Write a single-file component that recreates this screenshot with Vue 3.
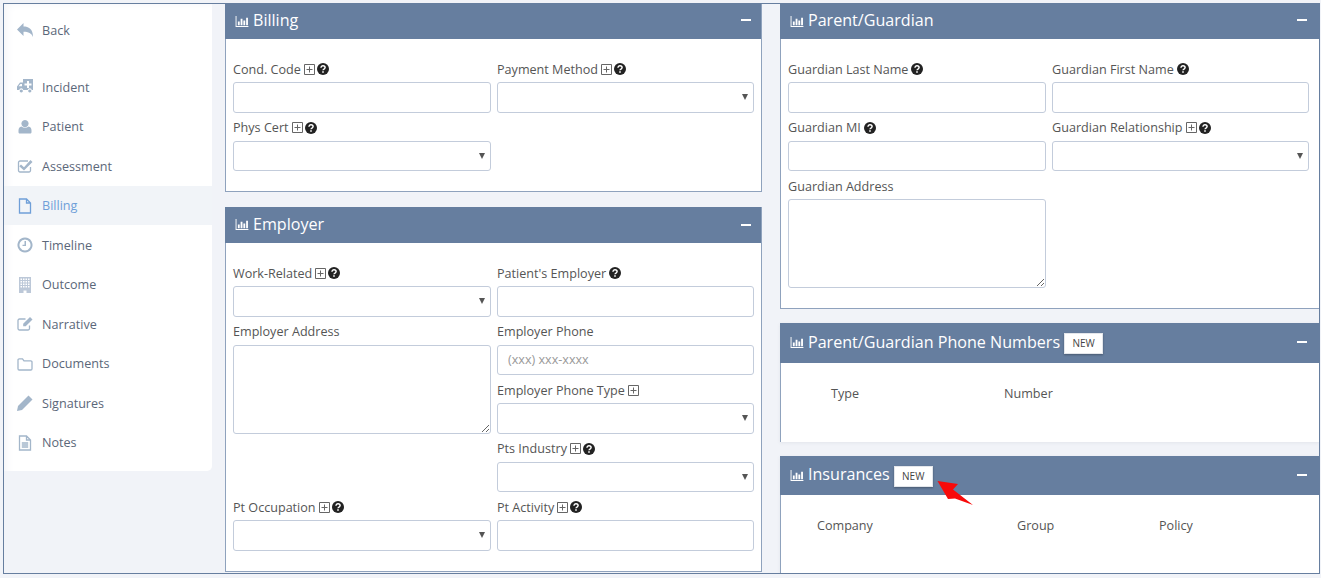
<script setup>
const nav = [
  { t: 'Back', cls: 'back', f: ['M0 6.500 6.500 0v3.600c5 0 9.500 2.400 9.500 10.400-1.500-3.800-4.500-5.200-9.500-5.200V13z'] },
  { t: 'Incident', cls: 'gapped', f: ['M6 0h10v11h-1.200a2.100 2.100 0 0 0-4.100 0H6.300a2.100 2.100 0 0 0-4.100 0H0V7.500L3 3.500h3zM10 2v2.500H7.500v2H10V9h2V6.500h2.500v-2H12V2zM5 5H3.500L1.500 7.300H5z', 'M4.300 10.400a1.600 1.600 0 1 1-.01 0zM12.800 10.400a1.600 1.600 0 1 1-.01 0z'] },
  { t: 'Patient', f: ['M8 1a3.600 3.600 0 1 1-.01 0zM4.500 7.500c1 .8 2.200 1.200 3.500 1.200s2.500-.4 3.500-1.200c2 .2 3 1.700 3 4v1.800c0 .9-.7 1.200-1.300 1.200H2.800c-.6 0-1.300-.3-1.300-1.200v-1.800c0-2.300 1-3.800 3-4z'] },
  { t: 'Assessment', s: ['M13.500 9v3.500a1.500 1.500 0 0 1-1.500 1.500H3a1.500 1.500 0 0 1-1.500-1.500v-8A1.500 1.500 0 0 1 3 3h8'], f: ['M4 6.500 7 9.300 13.500 2 15.500 4 7 12.500 2.200 8.300z'] },
  { t: 'Billing', active: true, s: ['M2.500 1h7l4 4v10h-11zM9.500 1v4h4'] },
  { t: 'Timeline', s: ['M8 1.500a6.500 6.500 0 1 1-.01 0z'], f: ['M7.500 4h1.500v5H5.500V7.700h2z'], w: 2 },
  { t: 'Outcome', cls: 'pale', f: ['M2 0h12v16H9.500v-2.500h-3V16H2zM3.500 1.500v1.500h1.500V1.500zM6 1.500v1.500h1.500V1.500zM8.500 1.500v1.500H10V1.500zM11 1.500v1.500h1.500V1.500zM3.500 4v1.500h1.500V4zM6 4v1.500h1.500V4zM8.500 4v1.500H10V4zM11 4v1.500h1.500V4zM3.500 6.500V8h1.500V6.500zM6 6.500V8h1.500V6.500zM8.500 6.500V8H10V6.500zM11 6.500V8h1.500V6.500zM3.500 9v1.500h1.500V9zM6 9v1.500h1.500V9zM8.500 9v1.500H10V9zM11 9v1.500h1.500V9z'] },
  { t: 'Narrative', s: ['M12.500 9.500v3A1.500 1.500 0 0 1 11 14H2.500A1.500 1.500 0 0 1 1 12.500v-8A1.500 1.500 0 0 1 2.500 3h6'], f: ['M13 1l2.500 2.500-6.800 6.800H6.200V7.800z'] },
  { t: 'Documents', s: ['M1 4a1.200 1.200 0 0 1 1.200-1.200h3.300l1.500 2h6.800A1.200 1.200 0 0 1 15 6v6.800a1.200 1.200 0 0 1-1.200 1.200H2.200A1.200 1.200 0 0 1 1 12.800z'] },
  { t: 'Signatures', f: ['M11.500.5l4 4L5 15l-5 1 1-5z'] },
  { t: 'Notes', s: ['M2.500 1h7l4 4v10h-11zM9.500 1v4h4M4.800 8h6.400M4.800 10h6.400M4.800 12h6.400'] }
]

const billing = [
  { l: 'Cond. Code', p: 1, q: 1 },
  { l: 'Payment Method', p: 1, q: 1, sel: 1 },
  { l: 'Phys Cert', p: 1, q: 1, sel: 1 }
]
const employer = [
  { l: 'Work-Related', p: 1, q: 1, sel: 1 },
  { l: "Patient's Employer", q: 1 },
  { l: 'Employer Address', area: 1 },
  { l: 'Employer Phone', ph: '(xxx) xxx-xxxx' },
  { l: 'Employer Phone Type', p: 1, sel: 1 },
  { l: 'Pts Industry', p: 1, q: 1, sel: 1, col2: 1 },
  { l: 'Pt Occupation', p: 1, q: 1, sel: 1 },
  { l: 'Pt Activity', p: 1, q: 1 }
]
const guardian = [
  { l: 'Guardian Last Name', q: 1 },
  { l: 'Guardian First Name', q: 1 },
  { l: 'Guardian MI', q: 1 },
  { l: 'Guardian Relationship', p: 1, q: 1, sel: 1 },
  { l: 'Guardian Address', area: 1 }
]
const cardsLeft = [
  { title: 'Billing', fields: billing, cls: 'billing' },
  { title: 'Employer', fields: employer, cls: 'employer' }
]
</script>

<template>
  <div class="frame">
    <aside class="side">
      <a v-for="n in nav" :key="n.t" class="nav" :class="[n.cls, { active: n.active }]">
        <svg class="nav-ico" viewBox="0 0 16 16">
          <path v-for="d in n.f || []" :key="d" :d="d" fill="currentColor" fill-rule="evenodd" />
          <path v-for="d in n.s || []" :key="d" :d="d" fill="none" stroke="currentColor" :stroke-width="n.w || 1.300" />
        </svg>
        <span>{{ n.t }}</span>
      </a>
    </aside>

    <main class="cols">
      <div class="col">
        <section v-for="c in cardsLeft" :key="c.title" class="card" :class="c.cls">
          <header class="head">
            <svg class="bars" viewBox="0 0 14 12"><path d="M0 0h1v11h13v1H0zM2.500 6h2v4h-2zM5.500 3h2v7h-2zM8.500 5h2v5h-2zM11.500 2h2v8h-2z" fill="currentColor" /></svg>
            <h2>{{ c.title }}</h2>
            <i class="minus"></i>
          </header>
          <div class="form">
            <div v-for="f in c.fields" :key="f.l" class="field" :class="{ area: f.area, col2: f.col2 }">
              <label>{{ f.l }}
                <svg v-if="f.p" class="plus" viewBox="0 0 11 11"><path d="M.5.500h10v10H.5zM2.500 5.500h6M5.500 2.500v6" fill="none" stroke="currentColor" /></svg>
                <svg v-if="f.q" class="help" viewBox="0 0 12 12"><circle cx="6" cy="6" r="6" fill="currentColor" /><path d="M4 4.700c0-1.300 1-1.900 2-1.900s2.100.6 2.100 1.800c0 1.500-2.100 1.400-2.100 2.700" fill="none" stroke="#fff" stroke-width="1.500" /><path d="M5.200 8.200h1.600v1.500H5.200z" fill="#fff" /></svg>
              </label>
              <textarea v-if="f.area"></textarea>
              <div v-else-if="f.sel" class="select"><select></select></div>
              <input v-else type="text" :placeholder="f.ph" />
            </div>
          </div>
        </section>
      </div>

      <div class="col right">
        <section class="card guardian">
          <header class="head">
            <svg class="bars" viewBox="0 0 14 12"><path d="M0 0h1v11h13v1H0zM2.500 6h2v4h-2zM5.500 3h2v7h-2zM8.500 5h2v5h-2zM11.500 2h2v8h-2z" fill="currentColor" /></svg>
            <h2>Parent/Guardian</h2>
            <i class="minus"></i>
          </header>
          <div class="form">
            <div v-for="f in guardian" :key="f.l" class="field" :class="{ area: f.area }">
              <label>{{ f.l }}
                <svg v-if="f.p" class="plus" viewBox="0 0 11 11"><path d="M.5.500h10v10H.5zM2.500 5.500h6M5.500 2.500v6" fill="none" stroke="currentColor" /></svg>
                <svg v-if="f.q" class="help" viewBox="0 0 12 12"><circle cx="6" cy="6" r="6" fill="currentColor" /><path d="M4 4.700c0-1.300 1-1.900 2-1.900s2.100.6 2.100 1.800c0 1.500-2.100 1.400-2.100 2.700" fill="none" stroke="#fff" stroke-width="1.500" /><path d="M5.200 8.200h1.600v1.500H5.200z" fill="#fff" /></svg>
              </label>
              <textarea v-if="f.area"></textarea>
              <div v-else-if="f.sel" class="select"><select></select></div>
              <input v-else type="text" />
            </div>
          </div>
        </section>

        <section class="card soft phones">
          <header class="head tall">
            <svg class="bars" viewBox="0 0 14 12"><path d="M0 0h1v11h13v1H0zM2.500 6h2v4h-2zM5.500 3h2v7h-2zM8.500 5h2v5h-2zM11.500 2h2v8h-2z" fill="currentColor" /></svg>
            <h2>Parent/Guardian Phone Numbers</h2>
            <button class="new">NEW</button>
            <i class="minus"></i>
          </header>
          <div class="tbl phone-cols"><span>Type</span><span>Number</span></div>
        </section>

        <section class="card soft insurances">
          <header class="head tall">
            <svg class="bars" viewBox="0 0 14 12"><path d="M0 0h1v11h13v1H0zM2.500 6h2v4h-2zM5.500 3h2v7h-2zM8.500 5h2v5h-2zM11.500 2h2v8h-2z" fill="currentColor" /></svg>
            <h2>Insurances</h2>
            <button class="new">NEW</button>
            <i class="minus"></i>
            <svg class="arrow" viewBox="0 0 40 28"><path d="M.5 1 21 4 16 9.500 36 25 18 18.500 11 19z" fill="#f80a0a" /></svg>
          </header>
          <div class="tbl ins-cols"><span>Company</span><span>Group</span><span>Policy</span></div>
        </section>
      </div>
    </main>
  </div>
</template>

<style>
html, body { background: #f1f3f8; }
</style>

<style scoped>
.frame {
  margin: 3px 1px 0 3px;
  height: 571px;
  box-sizing: border-box;
  border: 1px solid #667e9f;
  background: #f1f3f8;
  display: flex;
  align-items: flex-start;
  overflow: hidden;
  font-family: "Open Sans", sans-serif;
  font-size: 12.600px;
  color: #555;
}
.side {
  flex: 0 0 208px;
  box-sizing: border-box;
  height: 467px;
  padding-top: 6.750px;
  background: #fff;
  border-radius: 0 0 5px 0;
  box-shadow: inset 9px 6px 8px -6px #f4f5f8;
}
.nav {
  display: flex;
  align-items: center;
  height: 39.500px;
  padding-left: 13px;
  gap: 9px;
  color: #5b6779;
}
.nav.gapped { margin-top: 17px; }
.nav.active { background: #f1f4f8; color: #6f9fd8; }
.nav-ico { width: 16px; height: 16px; color: #a3b6ca; flex: none; }
.nav.active .nav-ico { color: #6f9fd8; }
.nav.pale .nav-ico { color: #bcc8d8; }
.cols {
  flex: 1;
  margin-left: 13px;
  display: grid;
  grid-template-columns: 537px 1fr;
  gap: 18px;
}
.col { display: flex; flex-direction: column; gap: 15px; min-width: 0; }
.col.right { gap: 14px; }
.card {
  background: #fff;
  border: 1px solid #8fa2bd;
  border-top: 0;
  box-sizing: border-box;
}
.card.soft {
  border-width: 0 0 0 1px;
  box-shadow: 0 1px 3px rgba(120, 130, 150, .12);
}
.billing { height: 188px; }
.employer { height: 365px; }
.guardian { height: 305px; border-right: 0; }
.phones { height: 119px; }
.insurances { height: 130px; }
.head {
  position: relative;
  display: flex;
  align-items: center;
  height: 35px;
  margin-left: -1px;
  padding-left: 10px;
  background: #667e9f;
  color: #fff;
}
.employer .head { height: 36px; }
.head.tall { height: 40px; }
.insurances .head.tall { height: 39px; }
.bars { width: 14px; height: 11px; margin: 0 4px 1px 0; flex: none; }
h2 { margin: 0 0 3px; font-size: 16.100px; font-weight: 400; }
.minus {
  position: absolute;
  top: 15px;
  right: 10px;
  width: 10px;
  height: 2px;
  background: #fff;
}
.employer .minus { top: 17px; }
.tall .minus { top: 18px; right: 12px; }
.guardian .minus { right: 12px; }
.new {
  margin-left: 4px;
  width: 39px;
  height: 21px;
  padding: 0;
  background: #fff;
  color: #444;
  border: 1px solid #e3e6eb;
  box-shadow: 0 1px 2px rgba(0, 0, 0, .3);
  font: 500 10px "Open Sans", sans-serif;
}
.insurances .new { margin-top: 1px; }
.arrow {
  position: absolute;
  left: 157px;
  top: 24px;
  width: 40px;
  height: 28px;
}
.form {
  display: grid;
  grid-template-columns: 258px 257px;
  grid-auto-rows: 58.500px;
  column-gap: 6px;
  padding: 21px 0 0 7px;
}
.field { display: flex; flex-direction: column; min-width: 0; }
.field.area { grid-row: span 2; }
.field.col2 { grid-column: 2; }
label {
  display: flex;
  align-items: center;
  gap: 3px;
  height: 22px;
  flex: none;
  padding-bottom: 4px;
  box-sizing: border-box;
  white-space: nowrap;
}
.plus { width: 11px; height: 11px; color: #666; flex: none; }
.help { width: 12px; height: 12px; color: #222; flex: none; }
.plus + .help { margin-left: -1px; }
input, select, textarea {
  display: block;
  width: 100%;
  box-sizing: border-box;
  border: 1px solid #c3ccdb;
  border-radius: 3px;
  background: #fff;
  font: 12.600px "Open Sans", sans-serif;
  padding: 0 10px;
  margin: 0;
  outline: 0;
}
input, select { height: 30.500px; }
input::placeholder { color: #999; }
select { appearance: none; }
.select { position: relative; }
.select::after {
  content: "";
  position: absolute;
  right: 6px;
  top: 12px;
  border-style: solid;
  border-width: 6px 3px 0;
  border-color: #555 transparent transparent;
  pointer-events: none;
}
textarea { height: 89px; resize: vertical; }
.tbl { display: grid; padding-top: 22px; line-height: 18px; }
.phone-cols { grid-template-columns: 173px 1fr; padding-left: 50px; }
.ins-cols { grid-template-columns: 200px 142px 1fr; padding-left: 36px; }
</style>
